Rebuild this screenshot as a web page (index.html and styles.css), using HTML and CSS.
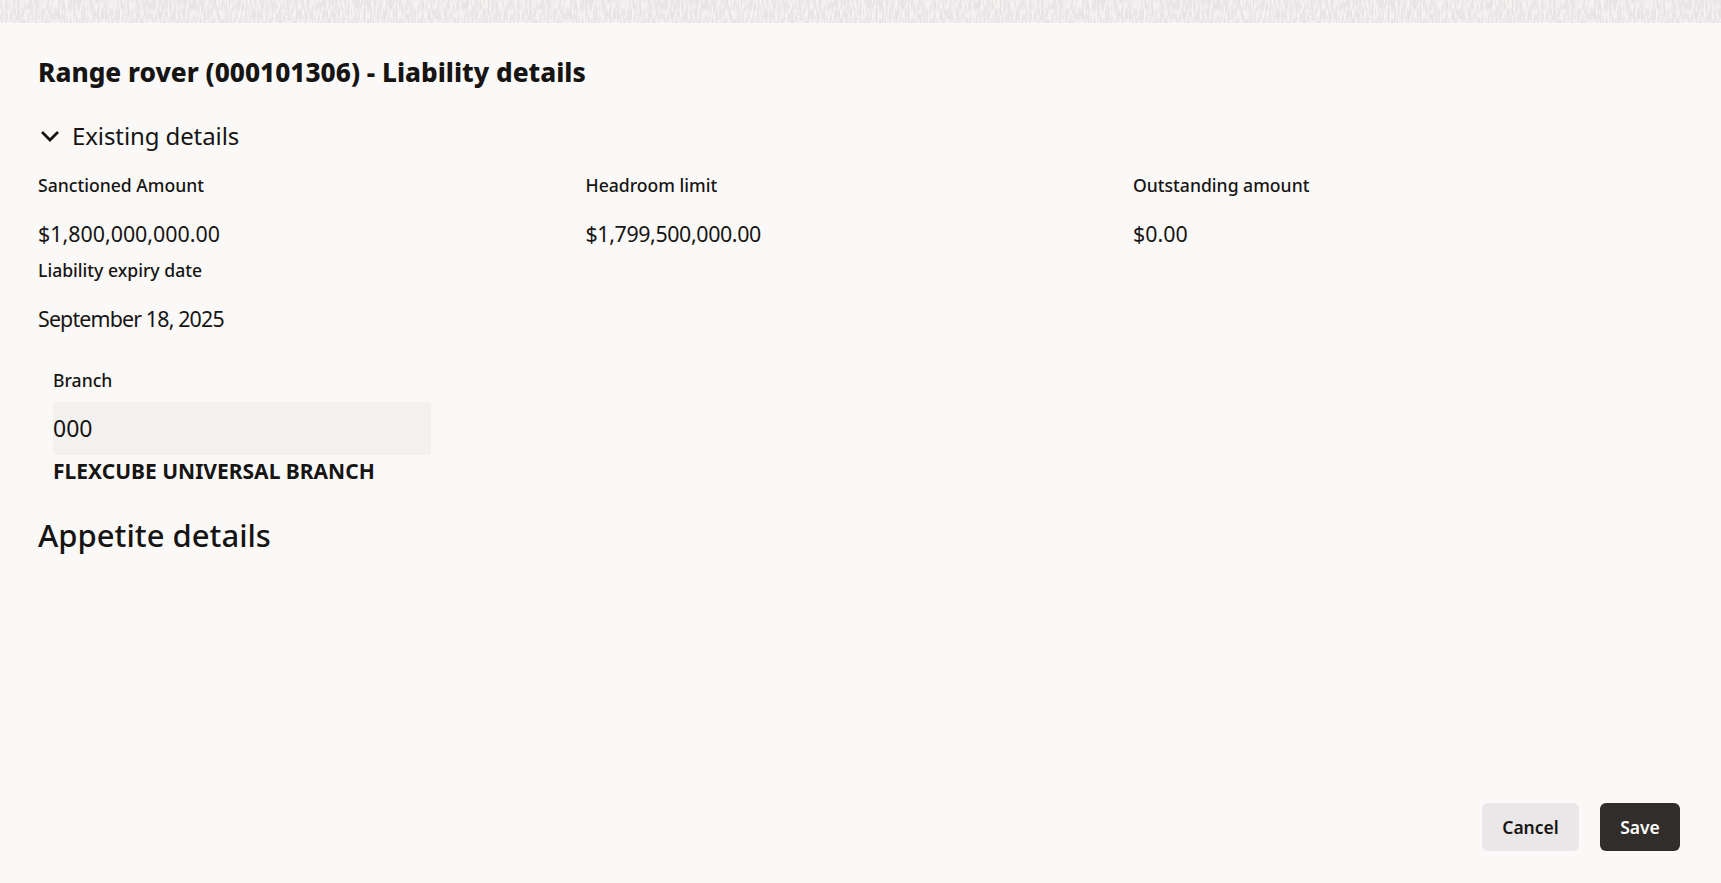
FILE: index.html
```html
<!DOCTYPE html>
<html lang="en">
<head>
    <meta charset="UTF-8">
    <title>Liability details</title>
    <link rel="stylesheet" href="styles.css">
</head>
<body>
    <svg class="banner" width="100%" height="23">
        <filter id="grain" x="0" y="0" width="100%" height="100%" color-interpolation-filters="sRGB">
            <feTurbulence type="fractalNoise" baseFrequency="0.5 0.1" numOctaves="2" seed="4"/>
            <feColorMatrix type="matrix" values="0 0 0 0 0.905  0 0 0 0 0.895  0 0 0 0 0.895  5 0 0 0 -1.9"/>
        </filter>
        <rect width="100%" height="23" fill="#f4f3f2"/>
        <rect width="100%" height="23" filter="url(#grain)"/>
    </svg>
    <div class="page">
        <h1 class="title">Range rover (000101306) - Liability details</h1>

        <div class="section-head">
            <svg class="chevron" width="20" height="12" viewBox="0 0 20 12"><path d="M2 2l8 8 8-8" fill="none" stroke="#161513" stroke-width="2.8"/></svg>
            <span>Existing details</span>
        </div>

        <div class="details">
            <div class="item">
                <div class="label">Sanctioned Amount</div>
                <div class="value">$1,800,000,000.00</div>
            </div>
            <div class="item">
                <div class="label">Headroom limit</div>
                <div class="value value-limit">$1,799,500,000.00</div>
            </div>
            <div class="item">
                <div class="label">Outstanding amount</div>
                <div class="value">$0.00</div>
            </div>
            <div class="item">
                <div class="label">Liability expiry date</div>
                <div class="value value-date">September 18, 2025</div>
            </div>
        </div>

        <div class="branch">
            <div class="label">Branch</div>
            <div class="field">000</div>
            <div class="branch-name">FLEXCUBE UNIVERSAL BRANCH</div>
        </div>

        <h2 class="subtitle">Appetite details</h2>

        <div class="footer">
            <button class="btn btn-cancel">Cancel</button>
            <button class="btn btn-save">Save</button>
        </div>
    </div>
</body>
</html>
```

FILE: styles.css
```css
html, body {
    height: 100%;
}
body {
    margin: 0;
    display: flex;
    flex-direction: column;
    font-family: "Noto Sans", "Open Sans", sans-serif;
    color: #161513;
    background: #fbf9f8;
    overflow: hidden;
}
.banner {
    display: block;
    flex: none;
}
.page {
    flex: 1;
    display: flex;
    flex-direction: column;
    padding: 0 41px 32px 38px;
}
.title {
    margin: 30px 0 0;
    font-size: 26.2px;
    line-height: 38px;
    font-weight: 800;
}
.section-head {
    display: flex;
    align-items: center;
    gap: 12px;
    margin-top: 28px;
    font-size: 24px;
    letter-spacing: -0.1px;
    line-height: 34px;
}
.chevron {
    margin-left: 2px;
}
.details {
    display: grid;
    grid-template-columns: repeat(3, 547.5px);
    margin-top: 19px;
}
.item {
    height: 85px;
}
.label {
    font-size: 17.6px;
    line-height: 26px;
    font-weight: 500;
}
.value {
    margin-top: 23px;
    font-size: 21.4px;
    line-height: 26px;
}
.value-limit {
    letter-spacing: -0.39px;
}
.value-date {
    letter-spacing: -0.85px;
}
.branch {
    margin: 25px 0 0 15px;
}
.field {
    width: 378px;
    height: 53px;
    margin-top: 9px;
    background: #f2f1f0;
    border-radius: 4px;
    font-size: 23px;
    line-height: 53px;
}
.branch-name {
    margin-top: 1px;
    font-size: 21px;
    line-height: 30px;
    font-weight: 700;
}
.subtitle {
    margin: 27px 0 0;
    font-size: 31px;
    line-height: 44px;
    font-weight: 500;
}
.footer {
    margin-top: auto;
    display: flex;
    justify-content: flex-end;
    gap: 21px;
}
.btn {
    height: 48px;
    border: none;
    border-radius: 6px;
    font-family: inherit;
    font-size: 17.5px;
    font-weight: 600;
}
.btn-cancel {
    width: 97px;
    background: #e9e7e7;
    color: #161513;
}
.btn-save {
    width: 80px;
    background: #312d2a;
    color: #fff;
}
```
